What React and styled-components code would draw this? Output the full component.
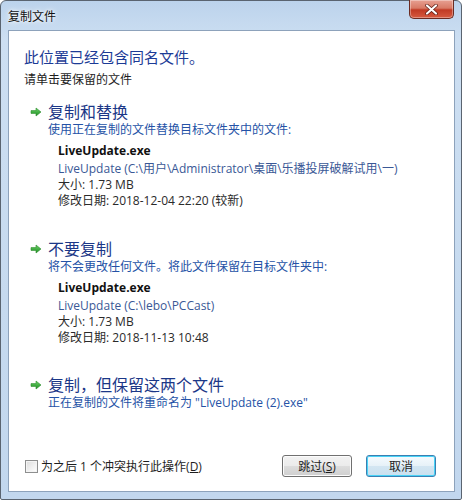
import React from 'react';
import styled, { createGlobalStyle } from 'styled-components';

const GlobalStyle = createGlobalStyle`
  html, body {
    margin: 0;
    padding: 0;
    background: #ffffff;
  }
  body {
    font-family: "Segoe UI", "Open Sans", "Noto Sans CJK SC", sans-serif;
    font-size: 12px;
    color: #1e1e1e;
  }
`;

const Window = styled.div`
  width: 462px;
  height: 500px;
  box-sizing: border-box;
  border: 1px solid #5a6470;
  border-radius: 6px 6px 2px 2px;
  background: linear-gradient(180deg, #bcd3ec 0%, #cddff2 8%, #c6daef 60%, #c2d7ee 100%);
  padding: 0 6px 7px 7px;
  display: flex;
  flex-direction: column;
`;

const TitleBar = styled.div`
  height: 29px;
  display: flex;
  justify-content: space-between;
  align-items: flex-start;
`;

const Title = styled.div`
  font-family: "Noto Sans CJK SC", sans-serif;
  font-size: 12px;
  line-height: 16px;
  color: #111;
  margin-top: 7px;
  text-shadow: 0 0 6px #ffffff, 0 0 3px #ffffff;
`;

const CloseButton = styled.div`
  width: 45px;
  height: 19px;
  margin-top: -1px;
  margin-right: 1px;
  box-sizing: border-box;
  border: 1px solid #6b2b22;
  border-top: none;
  border-radius: 0 0 5px 5px;
  background: linear-gradient(180deg, #e7a092 0%, #d87a66 45%, #c13a24 55%, #d65a40 100%);
  box-shadow: inset 0 0 0 1px rgba(255, 255, 255, 0.35);
  display: flex;
  align-items: center;
  justify-content: center;
`;

const Panel = styled.div`
  flex: 1;
  background: #ffffff;
  border: 1px solid #8da2bb;
  display: flex;
  flex-direction: column;
`;

const Body = styled.div`
  flex: 1;
  padding: 16px 16px 0 15px;
  display: flex;
  flex-direction: column;
`;

const Heading = styled.div`
  font-family: "Noto Sans CJK SC", sans-serif;
  font-size: 15px;
  line-height: 20px;
  color: #1c3b96;
`;

const Hint = styled.div`
  font-family: "Noto Sans CJK SC", sans-serif;
  font-size: 12px;
  line-height: 16px;
  margin-top: 4px;
  color: #1e1e1e;
`;

const Option = styled.div`
  display: flex;
  flex-direction: column;
  margin-top: ${(p) => p.$gap}px;
  padding-left: 24px;
  cursor: pointer;
`;

const OptionTitle = styled.div`
  position: relative;
  font-family: "Noto Sans CJK SC", sans-serif;
  font-size: 16px;
  line-height: 22px;
  color: #1b3787;
`;

const Arrow = styled.svg`
  position: absolute;
  left: -18px;
  top: 7px;
`;

const OptionNote = styled.div`
  font-size: 12px;
  line-height: 16px;
  color: #2452a6;
`;

const FileInfo = styled.div`
  display: flex;
  flex-direction: column;
  padding-left: 10px;
  margin-top: 4px;
`;

const FileName = styled.div`
  font-weight: 700;
  font-size: 12px;
  line-height: 18px;
  color: #111;
`;

const FilePath = styled.div`
  font-size: 12px;
  line-height: 17px;
  color: #3a5896;
  white-space: nowrap;
`;

const FileMeta = styled.div`
  font-size: 12px;
  line-height: 16px;
  color: #2a2a2a;
`;

const Footer = styled.div`
  height: 46px;
  display: flex;
  align-items: center;
  padding: 0 18px 2px 16px;
`;

const CheckLabel = styled.label`
  display: flex;
  align-items: center;
  gap: 3px;
  font-size: 12px;
  color: #1e1e1e;
  flex: 1;
`;

const CheckBox = styled.span`
  width: 11px;
  height: 11px;
  border: 1px solid #8e8f8f;
  background: linear-gradient(135deg, #dcdcdc 0%, #f2f2f2 60%, #ffffff 100%);
  box-shadow: inset 0 0 0 1px #f4f4f4;
`;

const Buttons = styled.div`
  display: flex;
  gap: 14px;
`;

const Button = styled.div`
  width: 70px;
  height: 22px;
  box-sizing: border-box;
  border-radius: 3px;
  border: 1px solid ${(p) => (p.$focused ? '#3c7fb1' : '#707070')};
  background: ${(p) =>
    p.$focused
      ? 'linear-gradient(180deg, #f6fbfe 0%, #e6f1f8 50%, #d3e6f2 51%, #c9e0ef 100%)'
      : 'linear-gradient(180deg, #f2f2f2 0%, #ebebeb 50%, #dddddd 51%, #cfcfcf 100%)'};
  box-shadow: inset 0 0 0 1px ${(p) => (p.$focused ? '#48d3f7' : '#fcfcfc')};
  display: flex;
  align-items: center;
  justify-content: center;
  font-size: 12px;
  color: #1e1e1e;
`;

const GreenArrow = () => (
  <Arrow width="12" height="10" viewBox="0 0 12 10">
    <defs>
      <linearGradient id="ga" x1="0" y1="0" x2="0" y2="1">
        <stop offset="0" stopColor="#6fd26a" />
        <stop offset="1" stopColor="#1c8f22" />
      </linearGradient>
    </defs>
    <path d="M1 3.6h5V1l5 4-5 4V6.4H1z" fill="url(#ga)" stroke="#2a8a2a" strokeWidth="0.6" />
  </Arrow>
);

const options = [
  {
    title: '复制和替换',
    note: '使用正在复制的文件替换目标文件夹中的文件:',
    gap: 13,
    file: {
      name: 'LiveUpdate.exe',
      path: 'LiveUpdate (C:\\用户\\Administrator\\桌面\\乐播投屏破解试用\\一)',
      size: '大小: 1.73 MB',
      date: '修改日期: 2018-12-04 22:20 (较新)',
    },
  },
  {
    title: '不要复制',
    note: '将不会更改任何文件。将此文件保留在目标文件夹中:',
    gap: 28,
    file: {
      name: 'LiveUpdate.exe',
      path: 'LiveUpdate (C:\\lebo\\PCCast)',
      size: '大小: 1.73 MB',
      date: '修改日期: 2018-11-13 10:48',
    },
  },
  {
    title: '复制，但保留这两个文件',
    note: '正在复制的文件将重命名为 "LiveUpdate (2).exe"',
    gap: 27,
  },
];

export default function App() {
  return (
    <>
      <GlobalStyle />
      <Window>
        <TitleBar>
          <Title>复制文件</Title>
          <CloseButton>
            <svg width="13" height="11" viewBox="0 0 13 11">
              <path
                d="M2 1.5l9 8M11 1.5l-9 8"
                stroke="#5a1a12"
                strokeWidth="3.6"
                strokeLinecap="round"
              />
              <path
                d="M2 1.5l9 8M11 1.5l-9 8"
                stroke="#ffffff"
                strokeWidth="2.2"
                strokeLinecap="round"
              />
            </svg>
          </CloseButton>
        </TitleBar>
        <Panel>
          <Body>
            <Heading>此位置已经包含同名文件。</Heading>
            <Hint>请单击要保留的文件</Hint>
            {options.map((o) => (
              <Option key={o.title} $gap={o.gap}>
                <OptionTitle>
                  <GreenArrow />
                  {o.title}
                </OptionTitle>
                <OptionNote>{o.note}</OptionNote>
                {o.file && (
                  <FileInfo>
                    <FileName>{o.file.name}</FileName>
                    <FilePath>{o.file.path}</FilePath>
                    <FileMeta>{o.file.size}</FileMeta>
                    <FileMeta>{o.file.date}</FileMeta>
                  </FileInfo>
                )}
              </Option>
            ))}
          </Body>
          <Footer>
            <CheckLabel>
              <CheckBox />
              <span>
                为之后 1 个冲突执行此操作(<u>D</u>)
              </span>
            </CheckLabel>
            <Buttons>
              <Button>
                <span>
                  跳过(<u>S</u>)
                </span>
              </Button>
              <Button $focused>取消</Button>
            </Buttons>
          </Footer>
        </Panel>
      </Window>
    </>
  );
}
